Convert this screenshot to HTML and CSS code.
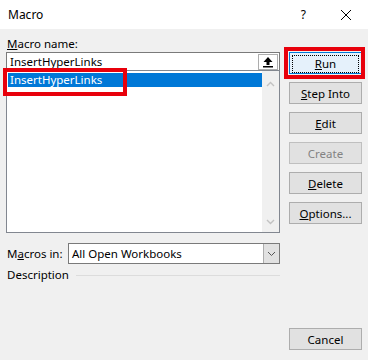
FILE: index.html
```html
<!DOCTYPE html>
<html lang="en">
  <head>
    <meta charset="UTF-8" />
    <title>Macro</title>
    <link rel="stylesheet" href="styles.css">
  </head>
  <body>
    <header class="titlebar">
      <span class="title">Macro</span>
      <span class="help">?</span>
      <svg class="close" width="12" height="12" viewBox="0 0 12 12">
        <path d="M1 1 L11 11 M11 1 L1 11" stroke="#000" stroke-width="1" fill="none" />
      </svg>
    </header>
    <div class="dialog">
      <div class="left">
        <label class="lbl"><u>M</u>acro name:</label>
        <div class="namebox">
          <span class="nametext">InsertHyperLinks</span>
          <span class="upbtn">
            <svg width="12" height="12" viewBox="0 0 12 12">
              <path d="M6 1 L10.5 6 L7.5 6 L7.5 9 L4.5 9 L4.5 6 L1.5 6 Z" fill="#000" />
              <rect x="1" y="10" width="10" height="1.5" fill="#000" />
            </svg>
          </span>
        </div>
        <div class="list">
          <div class="items">
            <div class="item selected">InsertHyperLinks</div>
          </div>
          <div class="scroll">
            <svg width="9" height="6" viewBox="0 0 9 6"><path d="M1 5 L4.5 1.5 L8 5" stroke="#c2c2c2" stroke-width="1.4" fill="none" /></svg>
            <svg width="9" height="6" viewBox="0 0 9 6"><path d="M1 1 L4.5 4.5 L8 1" stroke="#c2c2c2" stroke-width="1.4" fill="none" /></svg>
          </div>
        </div>
        <div class="macros-in">
          <label class="lbl">M<u>a</u>cros in:</label>
          <div class="select">
            <span class="seltext">All Open Workbooks</span>
            <span class="drop">
              <svg width="9" height="6" viewBox="0 0 9 6"><path d="M1 1 L4.5 4.5 L8 1" stroke="#555" stroke-width="1" fill="none" /></svg>
            </span>
          </div>
        </div>
        <div class="desc">
          <span>Description</span>
          <span class="rule"></span>
        </div>
      </div>
      <div class="buttons">
        <button class="btn default"><span class="focus"><u>R</u>un</span></button>
        <button class="btn"><u>S</u>tep Into</button>
        <button class="btn"><u>E</u>dit</button>
        <button class="btn" disabled>Create</button>
        <button class="btn"><u>D</u>elete</button>
        <button class="btn"><u>O</u>ptions...</button>
      </div>
      <div class="footer">
        <button class="btn">Cancel</button>
      </div>
    </div>
    <div class="mark mark-item"></div>
    <div class="mark mark-run"></div>
  </body>
</html>
```

FILE: styles.css
```css
body {
  margin: 0;
  width: 368px;
  height: 360px;
  background: #f0f0f0;
  font-family: "Noto Sans", "Open Sans", Arial, sans-serif;
  font-size: 11.5px;
  color: #000;
  overflow: hidden;
  position: relative;
}
u {
  text-decoration: underline;
  text-underline-offset: 1px;
}
.titlebar {
  height: 29px;
  background: #fff;
  display: flex;
  align-items: center;
  padding-left: 8px;
}
.title {
  flex: 1;
  font-size: 12px;
}
.help {
  font-size: 12px;
  margin-right: 34px;
}
.close {
  margin-right: 16px;
}
.dialog {
  display: grid;
  grid-template-columns: 274px 73px;
  column-gap: 9px;
  padding-left: 6px;
}
.left {
  padding-top: 7px;
}
.lbl {
  display: block;
  line-height: 16px;
  padding-left: 1px;
}
.namebox {
  height: 17px;
  background: #fff;
  border: 1px solid #7a7a7a;
  border-bottom: none;
  display: flex;
  align-items: center;
}
.nametext {
  flex: 1;
  padding-left: 3px;
}
.upbtn {
  width: 18px;
  height: 14px;
  margin-right: 1px;
  border: 1px solid #adadad;
  background: #fff;
  display: flex;
  align-items: center;
  justify-content: center;
}
.list {
  height: 161px;
  background: #fff;
  border: 1px solid #828790;
  display: flex;
}
.items {
  flex: 1;
  padding: 2px 0 0 1px;
}
.item {
  height: 14px;
  line-height: 14px;
  padding-left: 2px;
}
.item.selected {
  background: #0078d7;
  color: #fff;
}
.scroll {
  width: 17px;
  background: #f0f0f0;
  display: flex;
  flex-direction: column;
  justify-content: space-between;
  align-items: center;
  padding: 10px 0 7px;
}
.macros-in {
  display: flex;
  align-items: center;
  margin-top: 10px;
}
.macros-in .lbl {
  width: 61px;
}
.select {
  flex: 1;
  height: 19px;
  background: #fff;
  border: 1px solid #7a7a7a;
  display: flex;
  align-items: center;
}
.seltext {
  flex: 1;
  padding-left: 3px;
}
.drop {
  width: 15px;
  height: 19px;
  background: #e1e1e1;
  border-left: 1px solid #adadad;
  display: flex;
  align-items: center;
  justify-content: center;
}
.desc {
  display: flex;
  align-items: center;
  line-height: 18px;
  margin-top: 2px;
  padding-left: 1px;
}
.rule {
  flex: 1;
  height: 1px;
  background: #dcdcdc;
  margin-left: 7px;
}
.buttons {
  padding-top: 23px;
  display: flex;
  flex-direction: column;
  gap: 8px;
}
.btn {
  width: 73px;
  height: 22px;
  padding: 0;
  background: #e1e1e1;
  border: 1px solid #adadad;
  font-family: inherit;
  font-size: 11.5px;
  color: #000;
}
.btn:disabled {
  color: #838383;
  border-color: #bfbfbf;
  background: #e1e1e1;
}
.btn.default {
  background: #e5f1fb;
  border-color: #0078d7;
  padding: 2px;
}
.focus {
  display: block;
  height: 16px;
  line-height: 16px;
  border: 1px dotted #000;
}
.footer {
  grid-column: 2;
  padding-top: 44px;
}
.mark {
  position: absolute;
  border: 4px solid #e8000b;
}
.mark-item {
  left: 3px;
  top: 68px;
  width: 116px;
  height: 20px;
}
.mark-run {
  left: 284px;
  top: 47px;
  width: 73px;
  height: 24px;
}
```
